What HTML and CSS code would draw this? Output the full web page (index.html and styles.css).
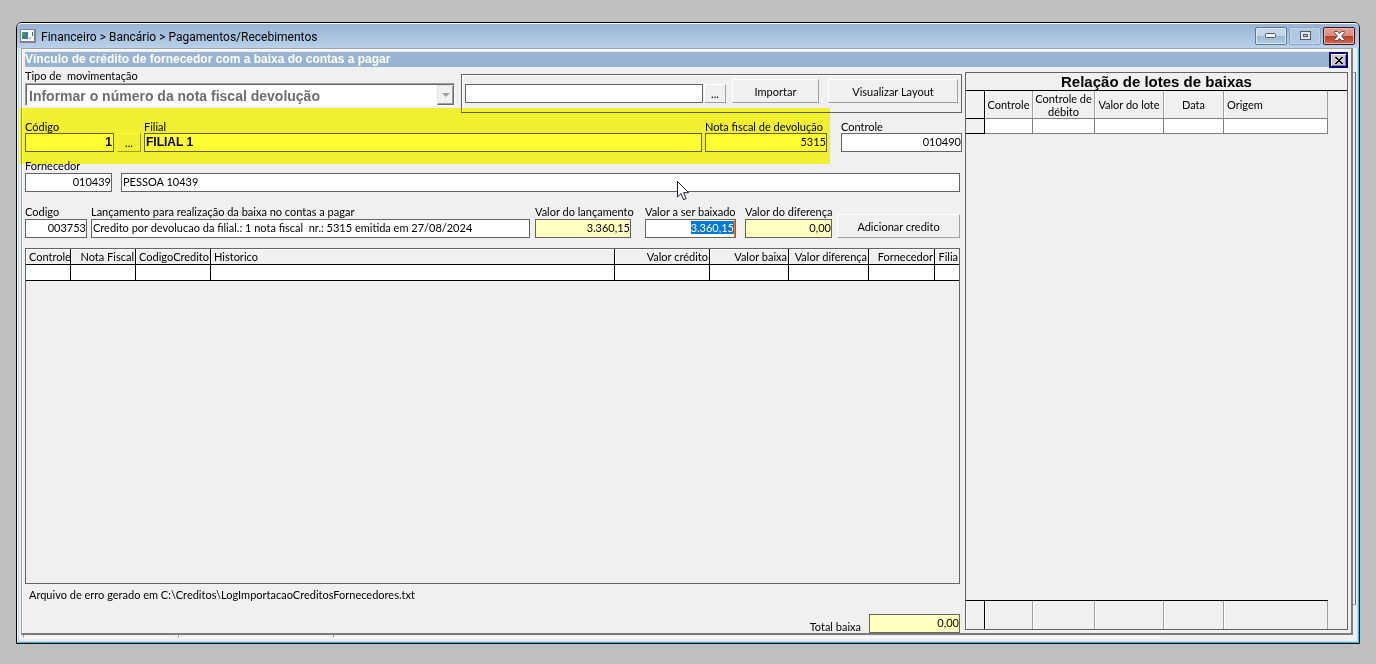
FILE: index.html
```html
<!DOCTYPE html>
<html lang="pt-BR">
  <head>
    <meta charset="UTF-8" />
    <meta name="viewport" content="width=device-width, initial-scale=1.0" />
    <title>Pagamentos/Recebimentos</title>
    <link rel="stylesheet" href="styles.css">
  </head>
  <body>
    <div class="window">
      <header class="titlebar">
        <svg class="app-icon" width="16" height="14" viewBox="0 0 16 14">
          <rect width="16" height="14" rx="1" fill="#7d8288" />
          <rect x="1" y="1" width="13" height="11" fill="#f6f6f6" />
          <rect x="2" y="3" width="6" height="7" fill="#3f7f96" />
          <rect x="2" y="3" width="3" height="4" fill="#3c9a6c" />
          <rect x="9" y="8" width="2" height="2" fill="#b5bcc4" />
          <rect x="12" y="3" width="1" height="4" fill="#3f66a0" />
        </svg>
        <span class="titlebar-text">Financeiro &gt; Bancário &gt; Pagamentos/Recebimentos</span>
        <div class="titlebar-buttons">
          <button class="win-button" aria-label="Minimizar">
            <svg width="12" height="5" viewBox="0 0 12 5">
              <rect x="0.5" y="0.5" width="10" height="4" rx="1" fill="#f4f4f4" stroke="#555a66" />
            </svg>
          </button>
          <button class="win-button win-button-off" aria-label="Maximizar">
            <svg width="11" height="9" viewBox="0 0 11 9">
              <rect x="0.5" y="0.5" width="10" height="8" fill="#dfe6ee" stroke="#555a66" />
              <rect x="3.5" y="3.5" width="4" height="2" fill="#b9cde2" stroke="#555a66" />
            </svg>
          </button>
          <button class="win-button win-button-close" aria-label="Fechar">
            <svg width="13" height="10" viewBox="0 0 13 10">
              <path d="M1.5 .5h3l2 2.200 2-2.200h3v1L8.600 5l2.900 3.500v1h-3l-2-2.200-2 2.200h-3v-1L4.400 5 1.500 1.500z" fill="#f8f8f8" stroke="#5a5563" />
            </svg>
          </button>
        </div>
      </header>

      <div class="workspace">
        <main class="form">
          <div class="form-header">
            <h1>Vínculo de crédito de fornecedor com a baixa do contas a pagar</h1>
            <button class="form-close" aria-label="Fechar formulário">
              <svg width="8" height="7" viewBox="0 0 8 7" shape-rendering="crispEdges">
                <path d="M0 0h2v1h1v1h2v-1h1v-1h2v1h-1v1h-1v1h-1v1h1v1h1v1h1v1h-2v-1h-1v-1h-2v1h-1v1h-2v-1h1v-1h1v-1h1v-1h-1v-1h-1v-1h-1z" fill="#000" />
              </svg>
            </button>
          </div>

          <div class="form-body">
            <section class="left">
              <div class="row row-top">
                <div class="field field-tipo">
                  <label for="tipo">Tipo de&nbsp; movimentação</label>
                  <div class="combo">
                    <select id="tipo" disabled>
                      <option>Informar o número da nota fiscal devolução</option>
                    </select>
                    <span class="combo-arrow"></span>
                  </div>
                </div>
                <div class="import-box">
                  <input type="text" class="import-path" aria-label="Arquivo">
                  <button class="button button-dots">...</button>
                  <button class="button button-importar">Importar</button>
                  <button class="button button-layout">Visualizar Layout</button>
                </div>
              </div>

              <div class="row row-filial">
                <div class="field field-filial-codigo">
                  <label for="codigo">Código</label>
                  <input type="text" id="codigo" class="number bold" value="1">
                </div>
                <button class="button button-dots button-busca">...</button>
                <div class="field field-filial">
                  <label for="filial">Filial</label>
                  <input type="text" id="filial" class="bold" value="FILIAL 1">
                </div>
                <div class="field field-nota">
                  <label for="nota">Nota fiscal de devolução</label>
                  <input type="text" id="nota" class="number" value="5315">
                </div>
                <div class="field field-controle">
                  <label for="controle">Controle</label>
                  <input type="text" id="controle" class="number" value="010490">
                </div>
                <div class="marker"></div>
              </div>

              <div class="row row-fornecedor">
                <div class="field field-fornecedor">
                  <label for="fornecedor">Fornecedor</label>
                  <input type="text" id="fornecedor" class="number" value="010439">
                </div>
                <input type="text" class="fornecedor-nome" aria-label="Nome do fornecedor" value="PESSOA 10439">
                <svg class="cursor" width="13" height="20" viewBox="0 0 13 20">
                  <path d="M.5 .5v15.500l3.500-3.300 2.600 6 2.600-1.100-2.600-5.900h5z" fill="#fff" stroke="#1c1c28" />
                </svg>
              </div>

              <div class="row row-lancamento">
                <div class="field field-lanc-codigo">
                  <label for="lanc-codigo">Codigo</label>
                  <input type="text" id="lanc-codigo" class="number" value="003753">
                </div>
                <div class="field field-lanc">
                  <label for="lanc">Lançamento para realização da baixa no contas a pagar</label>
                  <input type="text" id="lanc" value="Credito por devolucao da filial.: 1 nota fiscal  nr.: 5315 emitida em 27/08/2024">
                </div>
                <div class="field field-valor-lanc">
                  <label for="valor-lanc">Valor do lançamento</label>
                  <input type="text" id="valor-lanc" class="number readonly" value="3.360,15" readonly>
                </div>
                <div class="field field-baixado">
                  <label for="valor-baixado">Valor a ser baixado</label>
                  <input type="text" id="valor-baixado" class="number" value="3.360,15">
                </div>
                <div class="field field-diferenca">
                  <label for="valor-diferenca">Valor do diferença</label>
                  <input type="text" id="valor-diferenca" class="number readonly" value="0,00" readonly>
                </div>
                <button class="button button-adicionar">Adicionar credito</button>
              </div>

              <div class="grid">
                <table class="creditos">
                  <thead>
                    <tr>
                      <th class="w-controle">Controle</th>
                      <th class="w-nota right">Nota Fiscal</th>
                      <th class="w-codigo right">CodigoCredito</th>
                      <th>Historico</th>
                      <th class="w-credito right">Valor crédito</th>
                      <th class="w-baixa right">Valor baixa</th>
                      <th class="w-diferenca right">Valor diferença</th>
                      <th class="w-fornecedor right">Fornecedor</th>
                      <th class="w-filial right">Filia</th>
                    </tr>
                  </thead>
                  <tbody>
                    <tr>
                      <td></td><td></td><td></td><td></td><td></td><td></td><td></td><td></td><td></td>
                    </tr>
                  </tbody>
                </table>
              </div>

              <div class="footer">
                <p>Arquivo de erro gerado em C:\Creditos\LogImportacaoCreditosFornecedores.txt</p>
                <div class="total">
                  <label for="total">Total baixa</label>
                  <input type="text" id="total" class="number readonly" value="0,00" readonly>
                </div>
              </div>
            </section>

            <section class="lotes">
              <h2>Relação de lotes de baixas</h2>
              <table class="lotes-table">
                <thead>
                  <tr>
                    <th class="w-sel"></th>
                    <th class="w-lote-controle">Controle</th>
                    <th class="w-debito">Controle de débito</th>
                    <th class="w-lote">Valor do lote</th>
                    <th class="w-data">Data</th>
                    <th class="w-origem left-text">Origem</th>
                  </tr>
                </thead>
                <tbody>
                  <tr>
                    <td></td><td></td><td></td><td></td><td></td><td></td>
                  </tr>
                </tbody>
              </table>
              <div class="lotes-totals">
                <span class="w-sel"></span>
                <span class="w-lote-controle"></span>
                <span class="w-debito"></span>
                <span class="w-lote"></span>
                <span class="w-data"></span>
                <span class="w-origem"></span>
              </div>
            </section>
          </div>
        </main>
        <div class="side-edge"></div>
      </div>

      <footer class="statusbar">
        <span class="status-panel"></span>
        <span class="status-panel"></span>
        <span class="status-panel status-wide"></span>
      </footer>
    </div>
    <script>
      const baixado = document.getElementById("valor-baixado");
      baixado.focus();
      baixado.select();
    </script>
  </body>
</html>
```
FILE: styles.css
```css
* {
  margin: 0;
  padding: 0;
  box-sizing: border-box;
}
body {
  height: 100vh;
  min-height: 600px;
  padding: 22px 16px 20px;
  background: #c0c0c0;
  color: #000;
  font-family: Lato, "Liberation Sans", Arial, sans-serif;
  font-size: 11px;
  line-height: 13px;
}
input,
button,
select {
  font: inherit;
  color: inherit;
  border-radius: 0;
}

/* window frame */
.window {
  height: 100%;
  display: flex;
  flex-direction: column;
  border: 1px solid #000;
  border-radius: 6px 6px 0 0;
  background: #f0f0f0;
  box-shadow: inset -1px -1px #29c5ee, inset 1px 1px #fff, inset 2px 0 #b9d1ea, inset -2px -2px #c3d8ee;
}
.titlebar {
  display: flex;
  align-items: center;
  gap: 5px;
  height: 25px;
  padding: 0 4px 1px 3px;
  background: linear-gradient(#98b4d2, #b9d1ea);
  border-top: 1px solid #fff;
  border-radius: 5px 5px 0 0;
}
.titlebar-text {
  flex: 1;
  padding-top: 2px;
  font-family: Roboto, sans-serif;
  font-size: 12px;
  line-height: 16px;
}
.titlebar-buttons {
  display: flex;
  gap: 2px;
}
.win-button {
  width: 32px;
  height: 18px;
  display: flex;
  align-items: center;
  justify-content: center;
  border: 1px solid #5f7694;
  border-radius: 2px;
  background: linear-gradient(#c4d6ea 50%, #9ab6d4 50%, #b4cde6);
  box-shadow: inset 0 0 0 1px #dbe8f5;
}
.win-button-off {
  border-color: #8ba4c2;
  background: #b0c9e3;
  box-shadow: inset 0 0 0 1px #c3d6ea;
}
.win-button-close {
  border-color: #45121c;
  background: linear-gradient(#e3a296 0%, #d98b7c 50%, #b83c26 50%, #cf6a50);
  box-shadow: inset 0 0 0 1px #eab5aa;
}

/* client area */
.workspace {
  flex: 1;
  min-height: 0;
  display: flex;
  padding: 0 3px 0 4px;
}
.form {
  flex: 1;
  min-width: 0;
  display: flex;
  flex-direction: column;
  padding: 3px 3px 0;
  border: solid;
  border-width: 1px 2px 2px 1px;
  border-color: #a0a0a0 #7c7c7c #7c7c7c #a0a0a0;
  box-shadow: inset 1px 1px #fff;
}
.side-edge {
  width: 3px;
  margin: 24px 0 30px;
  border: 1px solid #a0a0a0;
  border-left: 0;
  border-right-color: #696969;
}
.form-header {
  display: flex;
  justify-content: space-between;
  height: 15px;
  background: #99b4d1;
}
.form-header h1 {
  color: #fff;
  font-family: "Liberation Sans", Arial, sans-serif;
  font-size: 12px;
  line-height: 15px;
}
.form-close {
  width: 19px;
  height: 16px;
  display: flex;
  align-items: center;
  justify-content: center;
  border: 2px solid #000080;
  background: #c8c8c8;
  box-shadow: inset 1px 1px #fff, inset -1px -1px #808080;
}
.form-body {
  flex: 1;
  min-height: 0;
  display: flex;
  gap: 3px;
}
.left {
  flex: 1;
  min-width: 0;
  display: flex;
  flex-direction: column;
}

/* fields */
.row {
  display: flex;
  align-items: flex-end;
}
.field {
  display: flex;
  flex-direction: column;
}
label {
  white-space: nowrap;
}
input {
  width: 100%;
  height: 19px;
  padding: 0 0 2px 1px;
  border: 1px solid #646464;
  background: #fff;
  outline: none;
}
.number {
  text-align: right;
}
.bold {
  padding: 0 1px 2px;
  font-family: "Liberation Sans", Arial, sans-serif;
  font-size: 12px;
  font-weight: bold;
}
.readonly {
  background: #ffffc0;
}
.button {
  height: 24px;
  border: 1px solid;
  border-color: #fff #a0a0a0 #a0a0a0 #fff;
  background: #f0f0f0;
}
.button-dots {
  width: 22px;
  height: 19px;
}

.row-top {
  align-items: flex-start;
  gap: 6px;
  padding-top: 1px;
}
.field-tipo {
  flex: 1;
  padding-top: 1px;
  gap: 1px;
}
.combo {
  display: flex;
  height: 23px;
  border: 1px solid;
  border-color: #a0a0a0 #fff #fff #a0a0a0;
  background: #fff;
  box-shadow: inset 1px 1px #696969;
}
.combo select {
  flex: 1;
  appearance: none;
  border: 0;
  padding: 2px 3px 0;
  background: transparent;
  color: #6d6d6d;
  font-family: "Liberation Sans", Arial, sans-serif;
  font-size: 14px;
  font-weight: bold;
  line-height: 16px;
  opacity: 1;
}
.combo-arrow {
  width: 17px;
  margin: 1px 0 0;
  display: flex;
  align-items: center;
  justify-content: center;
  border: 1px solid;
  border-color: #e3e3e3 #696969 #696969 #e3e3e3;
  background: #f0f0f0;
  box-shadow: inset -1px -1px #a0a0a0;
}
.combo-arrow::before {
  content: "";
  border: 4px solid transparent;
  border-top-color: #a0a0a0;
  border-bottom: 0;
}
.import-box {
  width: 501px;
  height: 39px;
  margin-top: 6px;
  padding: 4px 3px 9px 3px;
  display: flex;
  align-items: flex-end;
  border: 1px solid #646464;
  box-shadow: inset 1px 1px #fff;
}
.import-path {
  flex: 1;
  margin-right: 1px;
}
.button-importar {
  width: 87px;
  margin: 0 9px 0 6px;
}
.button-layout {
  width: 130px;
}

.row-filial {
  position: relative;
  margin-top: 7px;
}
.field-filial-codigo {
  width: 89px;
}
.button-busca {
  width: 24px;
  margin: 0 3px;
}
.field-filial {
  flex: 1;
  margin-right: 3px;
}
.field-nota {
  width: 122px;
  margin-right: 14px;
}
.field-controle {
  width: 121px;
}
/* highlighter over the branch fields */
.marker {
  position: absolute;
  inset: -12px 132px -12px -5px;
  background: #ffff33;
  mix-blend-mode: multiply;
  pointer-events: none;
}

.row-fornecedor {
  position: relative;
  margin-top: 7px;
  gap: 9px;
  padding-right: 2px;
}
.field-fornecedor {
  width: 87px;
  gap: 1px;
}
.fornecedor-nome {
  flex: 1;
}
.cursor {
  position: absolute;
  left: 652px;
  top: 22px;
}

.row-lancamento {
  margin-top: 13px;
  padding-right: 2px;
}
.row-lancamento .field {
  gap: 1px;
}
.field-lanc-codigo {
  width: 62px;
  margin-right: 4px;
}
.field-lanc {
  flex: 1;
  margin-right: 5px;
}
.field-valor-lanc {
  width: 96px;
  margin-right: 14px;
}
.field-baixado {
  width: 91px;
  margin-right: 9px;
}
.field-diferenca {
  width: 87px;
  margin-right: 5px;
}
.button-adicionar {
  width: 123px;
}
#valor-baixado {
  padding-right: 1px;
  background: linear-gradient(to left, #f08030 1px, #fff 1px);
}
#valor-baixado::selection {
  background: #0078d7;
  color: #fff;
}

/* credits grid */
table {
  border-collapse: separate;
  border-spacing: 0;
  table-layout: fixed;
}
th {
  font-weight: normal;
}
.grid {
  flex: 1;
  margin: 10px 2px 0 0;
  border: 1px solid #646464;
  overflow: hidden;
}
.creditos {
  width: 100%;
}
.creditos th {
  height: 16px;
  padding: 0 1px 0 3px;
  border-right: 1px solid #000;
  border-bottom: 1px solid #000;
  box-shadow: inset 1px 1px #fff;
  text-align: left;
  white-space: nowrap;
  overflow: hidden;
}
.creditos td {
  height: 16px;
  background: #fff;
  border-right: 1px solid #000;
  border-bottom: 1px solid #000;
}
.creditos th:last-child,
.creditos td:last-child {
  border-right: 0;
}
.creditos th.right {
  text-align: right;
}
.w-controle { width: 45px; }
.w-nota { width: 65px; }
.w-codigo { width: 75px; }
.w-credito { width: 95px; }
.w-baixa { width: 79px; }
.w-diferenca { width: 80px; }
.w-fornecedor { width: 66px; }
.w-filial { width: 24px; }

.footer {
  display: flex;
  justify-content: space-between;
  height: 49px;
  padding: 4px 2px 0 4px;
}
.total {
  display: flex;
  align-items: flex-end;
  gap: 8px;
}
.total input {
  width: 91px;
}

/* batches panel */
.lotes {
  width: 383px;
  margin: 5px 0 3px;
  display: flex;
  flex-direction: column;
  border: 1px solid #646464;
}
.lotes h2 {
  height: 18px;
  border-bottom: 1px solid #000;
  font-family: "Liberation Sans", Arial, sans-serif;
  font-size: 15px;
  line-height: 17px;
  text-align: center;
}
.lotes-table {
  width: 362px;
}
.lotes-table th {
  height: 28px;
  border-right: 1px solid #a0a0a0;
  border-bottom: 1px solid #808080;
  box-shadow: inset 1px 0 #fff;
}
.lotes-table th.left-text {
  padding-left: 3px;
  text-align: left;
}
.lotes-table td {
  height: 15px;
  background: #fff;
  border-right: 1px solid #808080;
  border-bottom: 1px solid #808080;
}
.lotes-table th:first-child,
.lotes-table td:first-child {
  background: #f0f0f0;
  border-color: #000;
}
.w-sel { width: 19px; }
.w-lote-controle { width: 48px; }
.w-debito { width: 62px; }
.w-lote { width: 69px; }
.w-data { width: 60px; }
.w-origem { width: 104px; }
.lotes-totals {
  display: flex;
  width: 362px;
  height: 29px;
  margin-top: auto;
  border-top: 1px solid #000;
}
.lotes-totals span {
  border-right: 1px solid #a0a0a0;
  box-shadow: inset 1px 0 #fff;
}
.lotes-totals span:first-child {
  border-right-color: #000;
}

/* status bar */
.statusbar {
  display: flex;
  gap: 3px;
  height: 8px;
  padding: 0 198px 5px 6px;
}
.status-panel {
  width: 152px;
  border-left: 1px solid #a0a0a0;
  border-bottom: 1px solid #fff;
}
.status-wide {
  flex: 1;
}
```
